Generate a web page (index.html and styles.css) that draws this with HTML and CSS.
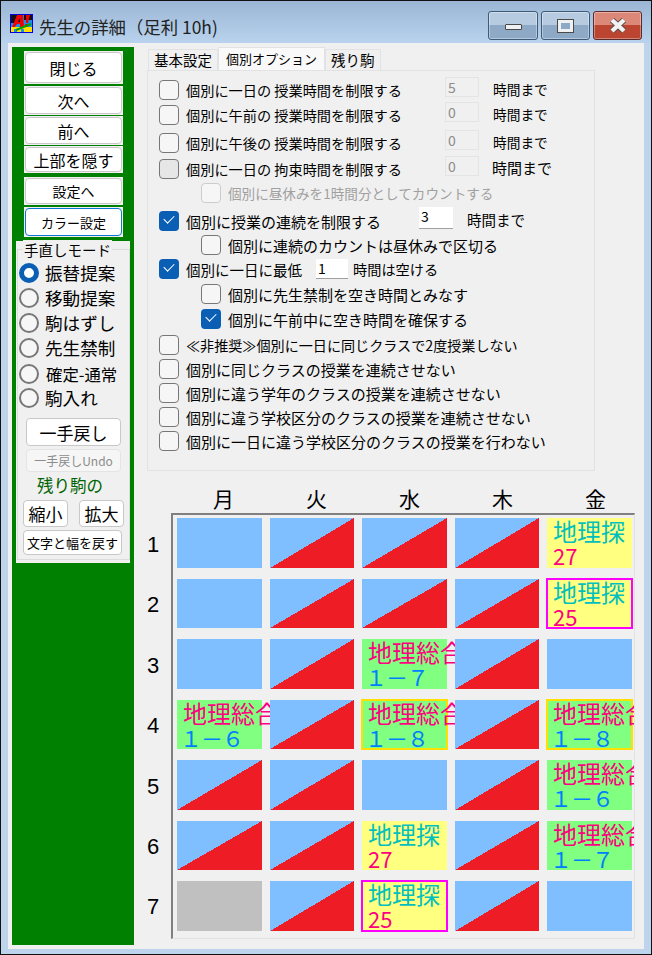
FILE: index.html
```html
<!DOCTYPE html>
<html>
<head>
  <meta charset="utf-8">
  <link rel="stylesheet" href="styles.css">
</head>
<body>
  <div class="window">
    <div class="titlebar">
      <svg class="app-icon" viewBox="0 0 23 19" width="23" height="19">
        <rect width="23" height="19" fill="#0000e0"/>
        <rect x="1" y="1" width="21" height="17" fill="#1a90e8"/>
        <rect x="1" y="1" width="7" height="8" fill="#111"/>
        <rect x="14" y="1" width="8" height="5" fill="#111"/>
        <rect x="1" y="13" width="21" height="5" fill="#ffe000"/>
        <rect x="4" y="15" width="3" height="3" fill="#1a90e8"/>
        <rect x="11" y="15" width="3" height="3" fill="#1a90e8"/>
        <path d="M2 13 L7 1 H13 L14 13 H10 L10 10 H7 L5 13 Z" fill="#f00000"/>
        <path d="M8 8 L10 4 V8 Z" fill="#111"/>
        <path d="M16 1 H20 L18 9 H16 Z M15 10 H18 V13 H15 Z" fill="#f00000"/>
        <path d="M6 16 L21 10" stroke="#00a000" stroke-width="2"/>
      </svg>
      <span class="title">先生の詳細（足利 10h)</span>
      <div class="caption-btns">
        <div class="cap-btn cap-wide"><span class="cap-min"></span></div>
        <div class="cap-btn"><span class="cap-max"></span></div>
        <div class="cap-btn cap-close">
          <svg viewBox="0 0 18 15" width="18" height="15">
            <path d="M3 2 L15 13 M15 2 L3 13" stroke="#5a4a48" stroke-width="6"/>
            <path d="M3 2 L15 13 M15 2 L3 13" stroke="#f2f2f2" stroke-width="4.4"/>
          </svg>
        </div>
      </div>
    </div>

    <div class="client">
      <div class="sidebar">
        <div class="btn-wrap h33"><button class="btn f16">閉じる</button></div>
        <div class="btn-wrap h29 mt2"><button class="btn f16">次へ</button></div>
        <div class="btn-wrap h29 mt1"><button class="btn f16">前へ</button></div>
        <div class="btn-wrap h27 mt1"><button class="btn f16">上部を隠す</button></div>
        <div class="btn-wrap h28 mt4"><button class="btn f14">設定へ</button></div>
        <div class="btn-wrap h30 mt2"><button class="btn f13 focused">カラー設定</button></div>

        <div class="mode-panel">
          <div class="mode-group">
            <div class="legend">手直しモード</div>
            <label class="radio-row"><span class="radio on"></span>振替提案</label>
            <label class="radio-row"><span class="radio"></span>移動提案</label>
            <label class="radio-row"><span class="radio"></span>駒はずし</label>
            <label class="radio-row"><span class="radio"></span>先生禁制</label>
            <label class="radio-row small"><span class="radio"></span>確定-通常</label>
            <label class="radio-row"><span class="radio"></span>駒入れ</label>
            <button class="btn f18 undo">一手戻し</button>
            <button class="btn f12 undo-sub" disabled>一手戻しUndo</button>
            <div class="rest-label">残り駒の</div>
            <div class="zoom-btns">
              <button class="btn f18 zoom-btn">縮小</button>
              <button class="btn f18 zoom-btn">拡大</button>
            </div>
            <button class="btn f13 reset">文字と幅を戻す</button>
          </div>
        </div>
      </div>

      <div class="main">
        <div class="tabs">
          <div class="tab">基本設定</div>
          <div class="tab active">個別オプション</div>
          <div class="tab">残り駒</div>
        </div>
        <div class="tab-panel">
          <div class="opt limit">
            <span class="check"></span><span class="text">個別に一日の 授業時間を制限する</span>
            <span class="num off">5</span><span class="unit">時間まで</span>
          </div>
          <div class="opt limit gap1">
            <span class="check"></span><span class="text">個別に午前の 授業時間を制限する</span>
            <span class="num off">0</span><span class="unit">時間まで</span>
          </div>
          <div class="opt limit gap4">
            <span class="check"></span><span class="text">個別に午後の 授業時間を制限する</span>
            <span class="num off">0</span><span class="unit">時間まで</span>
          </div>
          <div class="opt limit gap2">
            <span class="check grey"></span><span class="text">個別に一日の 拘束時間を制限する</span>
            <span class="num off">0</span><span class="unit big">時間まで</span>
          </div>
          <div class="opt sub off-text">
            <span class="check dim"></span><span class="text">個別に昼休みを1時間分としてカウントする</span>
          </div>
          <div class="opt gap4">
            <span class="check on"></span><span class="text run">個別に授業の連続を制限する</span>
            <span class="num">3</span><span class="unit wide">時間まで</span>
          </div>
          <div class="opt sub">
            <span class="check"></span><span class="text">個別に連続のカウントは昼休みで区切る</span>
          </div>
          <div class="opt">
            <span class="check on"></span><span class="text min">個別に一日に最低</span>
            <span class="num small">1</span><span class="unit tight">時間は空ける</span>
          </div>
          <div class="opt sub gap1">
            <span class="check"></span><span class="text">個別に先生禁制を空き時間とみなす</span>
          </div>
          <div class="opt sub gap1">
            <span class="check on"></span><span class="text">個別に午前中に空き時間を確保する</span>
          </div>
          <div class="opt gap2">
            <span class="check"></span><span class="text narrow">≪非推奨≫個別に一日に同じクラスで2度授業しない</span>
          </div>
          <div class="opt">
            <span class="check"></span><span class="text">個別に同じクラスの授業を連続させない</span>
          </div>
          <div class="opt">
            <span class="check"></span><span class="text">個別に違う学年のクラスの授業を連続させない</span>
          </div>
          <div class="opt">
            <span class="check"></span><span class="text">個別に違う学校区分のクラスの授業を連続させない</span>
          </div>
          <div class="opt">
            <span class="check"></span><span class="text">個別に一日に違う学校区分のクラスの授業を行わない</span>
          </div>
        </div>

        <div class="days">
          <span>月</span><span>火</span><span>水</span><span>木</span><span>金</span>
        </div>
        <div class="board">
          <div class="periods">
            <span>1</span><span>2</span><span>3</span><span>4</span><span>5</span><span>6</span><span>7</span>
          </div>
          <div class="table">
            <div class="cell free"></div><div class="cell tri"></div><div class="cell tri"></div><div class="cell tri"></div>
            <div class="cell tan"><b>地理探</b><i>27</i></div>

            <div class="cell free"></div><div class="cell tri"></div><div class="cell tri"></div><div class="cell tri"></div>
            <div class="cell tan pink-edge"><b>地理探</b><i>25</i></div>

            <div class="cell free"></div><div class="cell tri"></div>
            <div class="cell sou"><b>地理総合</b><i>１－７</i></div>
            <div class="cell tri"></div><div class="cell free"></div>

            <div class="cell sou"><b>地理総合</b><i>１－６</i></div>
            <div class="cell tri"></div>
            <div class="cell sou gold-edge"><b>地理総合</b><i>１－８</i></div>
            <div class="cell tri"></div>
            <div class="cell sou gold-edge"><b>地理総合</b><i>１－８</i></div>

            <div class="cell tri"></div><div class="cell tri"></div><div class="cell free"></div><div class="cell tri"></div>
            <div class="cell sou"><b>地理総合</b><i>１－６</i></div>

            <div class="cell tri"></div><div class="cell tri"></div>
            <div class="cell tan"><b>地理探</b><i>27</i></div>
            <div class="cell tri"></div>
            <div class="cell sou"><b>地理総合</b><i>１－７</i></div>

            <div class="cell blocked"></div><div class="cell tri"></div>
            <div class="cell tan pink-edge"><b>地理探</b><i>25</i></div>
            <div class="cell tri"></div><div class="cell free"></div>
          </div>
        </div>
      </div>
    </div>
  </div>
</body>
</html>
```
FILE: styles.css
```css
* {
  box-sizing: border-box;
}

html, body {
  margin: 0;
  padding: 0;
}

body {
  font-family: "Noto Sans CJK JP", "Noto Sans", sans-serif;
  color: #000;
}

.window {
  width: 652px;
  height: 955px;
  display: flex;
  flex-direction: column;
  border: 1px solid #111;
  background: #bdd4ec;
  overflow: hidden;
}

.titlebar {
  height: 42px;
  flex: none;
  display: flex;
  align-items: flex-start;
  padding: 13px 9px 0 9px;
  background: linear-gradient(#9bb6d4, #b9d3ee);
}

.app-icon {
  flex: none;
}

.title {
  margin-left: 6px;
  font-size: 17.4px;
  line-height: 26px;
  color: #222;
}

.caption-btns {
  margin-left: auto;
  margin-top: -3px;
  display: flex;
  gap: 3px;
}

.cap-btn {
  width: 49px;
  height: 29px;
  display: flex;
  align-items: center;
  justify-content: center;
  border: 1px solid #3f5a78;
  border-radius: 3px;
  background: linear-gradient(#b7cbe0 50%, #8ea9c6 50%);
  box-shadow: inset 0 0 0 1px rgba(255,255,255,0.35);
}

.cap-wide {
  width: 50px;
}

.cap-close {
  border-color: #5c2a2a;
  background: linear-gradient(#dc8878 50%, #bb4530 50%);
}

.cap-min {
  width: 17px;
  height: 6px;
  margin-top: 3px;
  background: #eef0f2;
  border: 1px solid #4a4a4a;
  border-radius: 1px;
}

.cap-max {
  width: 15px;
  height: 12px;
  border: 3px solid #eef0f2;
  outline: 1px solid #4a4a4a;
  background: #8ea9c6;
}

.client {
  flex: 1;
  display: flex;
  margin: 0 7px 5px 7px;
  padding: 4px 0 4px 4px;
  background: #f0f0f0;
  min-height: 0;
}

/* left green column */
.sidebar {
  width: 122px;
  flex: none;
  background: #008000;
  padding: 4px 0 0 4px;
}

.btn-wrap {
  width: 99px;
  margin-left: 8px;
  background: #f0f0f0;
  padding: 1px;
}

.h33 { height: 33px; }
.h30 { height: 30px; }
.h29 { height: 29px; }
.h28 { height: 28px; }
.h27 { height: 27px; }
.mt1 { margin-top: 1px; }
.mt2 { margin-top: 2px; }
.mt4 { margin-top: 4px; }

.btn {
  display: block;
  width: 100%;
  height: 100%;
  padding: 0;
  background: #fff;
  border: 1px solid #c8c8c8;
  border-radius: 4px;
  font-family: inherit;
  color: #000;
  white-space: nowrap;
}

.btn.focused {
  border: 1px solid #0a78d0;
}

.btn:disabled {
  background: #f6f6f6;
  border-color: #e4e4e4;
  color: #8c8c8c;
}

.f18 { font-size: 17px; }
.f16 { font-size: 16px; }
.f14 { font-size: 14px; }
.f13 { font-size: 13px; }
.f12 { font-size: 12px; }

.mode-panel {
  width: 114px;
  height: 322px;
  margin-top: 4px;
  background: #f0f0f0;
  padding: 8px 0 0 1px;
}

.mode-group {
  height: 311px;
  border: 1px solid #dcdcdc;
  padding: 10px 0 0 1px;
  position: relative;
}

.legend {
  position: absolute;
  top: -10px;
  left: 5px;
  padding: 0 1px;
  background: #f0f0f0;
  font-size: 14.5px;
  line-height: 20px;
}

.radio-row {
  height: 25px;
  display: flex;
  align-items: center;
  gap: 6px;
  font-size: 17.6px;
  white-space: nowrap;
}

.radio-row.small {
  margin: 1px 0 -1px 0;
  font-size: 16.4px;
  gap: 7px;
}

.radio {
  width: 20px;
  height: 20px;
  flex: none;
  border: 2px solid #777;
  border-radius: 50%;
  background: #f6f6f6;
}

.radio.on {
  border: 5.5px solid #0a5fb4;
  background: #fff;
}

.undo {
  width: 95px;
  height: 28px;
  margin: 8px 0 0 7px;
}

.undo-sub {
  width: 95px;
  height: 23px;
  margin: 3px 0 0 7px;
}

.rest-label {
  margin: 1px 0 0 18px;
  height: 25px;
  line-height: 25px;
  font-size: 16.5px;
  color: #006400;
}

.zoom-btns {
  display: flex;
  gap: 11px;
  margin: 2px 0 0 4px;
}

.zoom-btn {
  width: 45px;
  height: 27px;
}

.reset {
  width: 99px;
  height: 25px;
  margin: 3px 0 0 4px;
}

/* right side */
.main {
  flex: 1;
  min-width: 0;
  padding-left: 13px;
}

.tabs {
  height: 23px;
  display: flex;
  align-items: flex-end;
  padding-left: 1px;
  font-size: 14.5px;
}

.tab {
  height: 21px;
  padding: 0 5px;
  line-height: 20px;
  border: 1px solid #e2e2e2;
  border-bottom: none;
  white-space: nowrap;
}

.tab.active {
  height: 23px;
  padding: 0 7px;
  background: #f9f9f9;
  font-size: 13px;
  line-height: 22px;
}

.tab-panel {
  width: 448px;
  height: 401px;
  padding: 7px 0 0 11px;
  border: 1px solid #e2e2e2;
  font-size: 15px;
}

.opt {
  height: 24px;
  display: flex;
  align-items: center;
  white-space: nowrap;
}

.gap1 { margin-top: 1px; }
.gap2 { margin-top: 2px; }
.gap4 { margin-top: 4px; }

.check {
  width: 20px;
  height: 20px;
  flex: none;
  margin-right: 7px;
  border: 1.5px solid #777;
  border-radius: 4px;
  background: #f6f6f6;
}

.check.grey {
  background: #e6e6e6;
}

.check.dim {
  border-color: #ccc;
}

.check.on {
  position: relative;
  border: none;
  background: #0a5fb4;
}

.check.on::after {
  content: "";
  position: absolute;
  left: 5px;
  top: 4px;
  width: 9px;
  height: 5px;
  border-left: 1px solid #fff;
  border-bottom: 1px solid #fff;
  transform: rotate(-45deg);
}

.sub {
  padding-left: 42px;
}

.off-text {
  color: #a0a0a0;
  font-size: 13.6px;
}

.limit {
  font-size: 14.2px;
}

.limit .text {
  width: 259px;
}

.text.run {
  width: 233px;
}

.text.min {
  width: 130px;
  font-size: 14.5px;
}

.text.narrow {
  font-size: 14.1px;
}

.num {
  width: 34px;
  height: 22px;
  flex: none;
  margin-top: -6px;
  padding-left: 2px;
  background: #fff;
  border-bottom: 1px solid #a0a0a0;
  font-size: 14px;
  line-height: 18px;
}

.num.off {
  height: 20px;
  margin-top: -6px;
  background: #f0f0f0;
  border: 1px solid #e4e4e4;
  color: #8c8c8c;
}

.num.small {
  width: 32px;
  height: 20px;
  margin-top: 0;
}

.unit {
  margin-left: 14px;
  margin-top: -2px;
  font-size: 13.7px;
}

.unit.wide {
  font-size: 14.5px;
  margin-top: -4px;
}

.unit.big {
  font-size: 15px;
  margin-left: 13px;
  margin-top: -4px;
}

.unit.tight {
  margin-left: 5px;
  margin-top: 0;
  font-size: 14.2px;
}

.days {
  display: grid;
  grid-template-columns: repeat(5, 93px);
  width: 465px;
  margin: 13px 0 0 30px;
  height: 29px;
  text-align: center;
  font-size: 21px;
  line-height: 28px;
}

.board {
  display: flex;
}

.periods {
  width: 24px;
  flex: none;
  display: grid;
  grid-template-rows: repeat(7, 60.4px);
  padding: 2px 15px 0 0;
  font-size: 22px;
  font-family: "Liberation Sans", sans-serif;
  line-height: 60px;
  text-align: center;
}

.table {
  width: 464px;
  height: 426px;
  display: grid;
  grid-template-columns: repeat(5, 84.5px);
  grid-template-rows: repeat(7, 49.5px);
  column-gap: 8px;
  row-gap: 11px;
  padding: 3px 0 0 4px;
  border-top: 2px solid #808080;
  border-left: 2px solid #808080;
  border-right: 1px solid #e2e2e2;
  border-bottom: 1px solid #e2e2e2;
  overflow: hidden;
}

.cell {
  position: relative;
  min-width: 0;
  white-space: nowrap;
  padding-left: 6px;
}

.cell b, .cell i {
  display: block;
  font-weight: 400;
  font-style: normal;
}

.cell b {
  font-size: 24px;
  height: 26px;
  line-height: 26px;
}

.cell i {
  font-size: 22px;
  height: 23px;
  line-height: 22px;
}

.sou i {
  margin-left: -3px;
  letter-spacing: -1px;
}

.free { background: #80bfff; }
.blocked { background: #c0c0c0; }
.tri { background: linear-gradient(to top left, #ee1c25 50%, #80bfff 50%); }

.tan { background: #ffff80; }
.tan b { color: #00bfbf; }
.tan i { color: #ff0080; }

.sou { background: #80ff80; }
.sou b { color: #ff0080; }
.sou i { color: #0080ff; }

.pink-edge, .gold-edge {
  margin: -1px;
  padding-left: 5px;
  border: 2px solid #ff00ff;
}

.pink-edge b, .gold-edge b {
  margin-top: -1px;
}

.gold-edge {
  border-color: #ffe000;
}
```
